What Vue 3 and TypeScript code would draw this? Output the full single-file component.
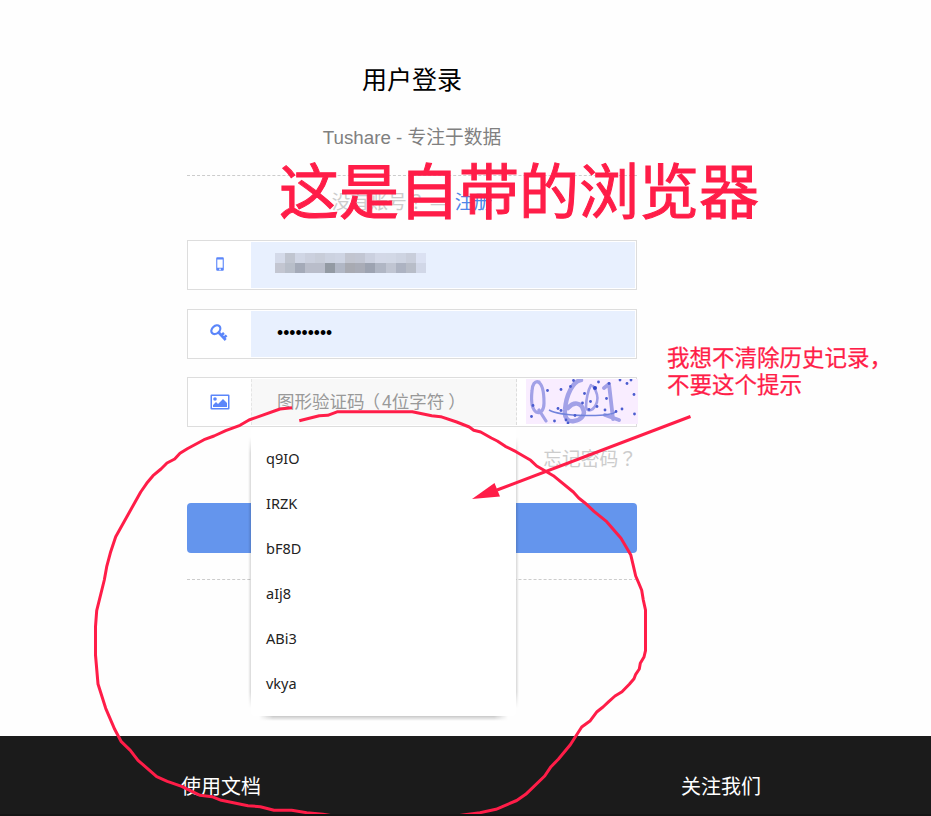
<script setup lang="ts">
const suggestions: string[] = ['q9IO', 'IRZK', 'bF8D', 'aIj8', 'ABi3', 'vkya']
const mosaic: string[] = [
  '#d4dae9', '#c0c5d0', '#d0d6e5', '#cbd0de', '#c8cdd9', '#ccd2e0', '#ced4e3', '#c2c5d0', '#c2c6d3', '#cbd0df', '#d3d8e7', '#d2d8e6', '#ced4e2', '#c9cedb', '#dbe1f2',
  '#c3c6d1', '#b8bec9', '#a4aab8', '#b9bdca', '#b9bdca', '#939aa3', '#b1b7c5', '#a8aab2', '#a9acb7', '#9da3b1', '#b0b6c4', '#c0c5d2', '#adb3c2', '#b8bdc8', '#d1d7e7',
]
const dots: number[][] = [
  [21.5, 11.5], [35, 10.5], [7, 26.5], [5.5, 37.5], [28.5, 42], [32, 29.5], [35, 31.5], [44.5, 7.5], [47.5, 1.5], [58.5, 14.5],
  [56.5, 24], [64.5, 22.5], [63, 30.5], [72.5, 3], [71, 27.5], [49, 36.5], [40, 41], [42, 44], [80.5, 19.5], [83, 4.5],
  [79, 31], [94, 1], [101, 4.5], [105, 1], [108, 15.5], [96, 30], [108.5, 35], [90, 32.5],
]
</script>

<template>
  <div class="page">
    <main class="login">
      <h1>用户登录</h1>
      <p class="subtitle">Tushare - 专注于数据</p>
      <div class="rule"></div>
      <p class="register">没有账号<span class="mark">？</span> — <a>注册</a></p>

      <div class="field">
        <span class="icon phone">
          <svg width="10" height="14" viewBox="0 0 10 14"><path fill-rule="evenodd" d="M2.2 .3h5.6q1 0 1 1v11.4q0 1-1 1H2.2q-1 0-1-1V1.3q0-1 1-1ZM2.3 2.5v8.3h5.4V2.5ZM5 11.5a.8.8 0 1 0 .01 0Z" /></svg>
        </span>
        <div class="input filled"><span class="mosaic"><i v-for="(c, n) in mosaic" :key="n" :style="{ backgroundColor: c }"></i></span></div>
      </div>
      <div class="field second">
        <span class="icon key">
          <svg width="18" height="18" viewBox="0 0 18 18"><g fill="none" stroke="#5b86fa"><ellipse cx="5.8" cy="5.7" rx="5" ry="3.700" transform="rotate(-42 5.8 5.7)" stroke-width="2.200" /><path d="M8.2 8l7.5 8M11.3 11.2l2.7-2.3M13.8 13.9l2.8-2.5" stroke-width="2.600" /></g></svg>
        </span>
        <div class="input filled password">•••••••••</div>
      </div>
      <div class="field third">
        <span class="icon">
          <svg width="20" height="16" viewBox="0 0 20 16"><path fill-rule="evenodd" d="M1.5.5h17q1 0 1 1v13q0 1-1 1h-17q-1 0-1-1v-13q0-1 1-1ZM2 2v12h16V2Z" /><circle cx="5" cy="5" r="1.8" /><path d="M3 13v-2l3-3 2 2 5-5 4 4v4Z" /></svg>
        </span>
        <div class="input captcha-input">图形验证码<span class="open">（</span>4位字符<span class="close">）</span></div>
        <svg class="captcha" width="112" height="45" viewBox="0 0 112 45">
          <rect width="112" height="45" fill="#f9edff" />
          <g class="scrawl" fill="none" stroke="#8588df" stroke-linecap="round" stroke-linejoin="round" opacity=".75">
            <path d="M13 3C9 1 6 6 6 12c-1 9 0 18 4 21 5 2 8-2 8-9C18 15 17 5 12 3M13 31l7 11" stroke-width="3.2" />
            <path d="M55 1c-8 1-15 15-16 30-1 8 3 12 9 11 7-1 12-6 9-12-2-6-9-8-15-1" stroke-width="4.5" />
            <path d="M65 6c-3 5-5 15-5 22 1 6 8 4 11-5 2-7-2-13-4-16" stroke-width="2.6" />
            <path d="M78 9l5-4 4 35M79 36l14 5" stroke-width="3.8" />
          </g>
          <path d="M23 31q9 5 36 5.500T90 32.500" fill="none" stroke="#7183dc" stroke-width="1.500" />
          <circle v-for="(d, n) in dots" :key="n" :cx="d[0]" :cy="d[1]" r="1.4" fill="#4a5ccf" />
          <circle cx="69" cy="9" r="2" fill="#2f43c3" />
        </svg>
        <ul class="suggestions">
          <li v-for="s in suggestions" :key="s">{{ s }}</li>
        </ul>
      </div>
      <p class="forgot">忘记密码<span class="mark">？</span></p>
      <div class="submit"></div>
      <div class="rule lower"></div>
    </main>
    <footer><h2>使用文档</h2><h2>关注我们</h2></footer>

    <div class="headline">这是自带的浏览器</div>
    <div class="note">我想不清除历史记录，<br />不要这个提示</div>
    <svg class="marks" width="931" height="814" viewBox="0 0 931 814">
      <g fill="none" stroke="#ff1d48" stroke-width="3" stroke-linejoin="round">
        <path d="M292 407.700L280 409 249 420 240 425.300 225.700 430.700 214 436 204 439.700 187.300 448.700 180 453.300 174.700 459 167 463 161 469 153 475.700 146.700 483.300 140.700 492 115.700 536.700 110.700 551.700 106.700 566.700 104.300 580 96.700 610.700 95.500 626.700 95.500 655 98 684 105.700 708.300 114.700 729.300 121.300 741.700 130.300 750.300 138 760.300 156.700 776.700 167.300 781.300 181.700 786.300 200 795.300 212 796.700 221.300 800.300 248 805.700 260.300 806.700 274 810.300 291.700 810.300 306.700 812.700 323 814.300 340 817H450L463 815 480 812.700 496 809.300 516.700 800.500 525.700 794.300 544.700 776 551 766.700 558.300 759.300 570.300 744.700 581.700 727 590.300 720.700 597 711.700 603 707 609 701.300 615 696 622 691.700 629.300 684.300 634 678.700 635.700 674.300 639.300 669 640.300 663.300 644 657 645.500 650.700V610L643.300 600 641.700 590.300 638.700 583 635.700 576 633 564.300 630.700 554.700 621 538.300 606.700 521.700 594 511.300 584.700 502.700 578.700 498 573.300 492 553.300 475.700 545.300 471 536.700 466 530.700 460.300 516 451.700 505.300 446.300 497.300 441 491.300 438 480.700 432 473.700 430.300 469.300 427 456.700 422 440.700 416.700 431.700 415.700 412.300 411.700H337.700L327.700 415.300 319.300 415.700 299.300 420.700" />
        <path d="M690.500 416.500L497 490" />
      </g>
      <path d="M472 499l22.500-16 5.500 13.500Z" fill="#ff1d48" />
    </svg>
  </div>
</template>

<style>
body { margin: 0; }
</style>

<style scoped>
* { box-sizing: border-box; }
.page { position: relative; width: 931px; height: 816px; overflow: hidden; background: #fefefe; font-family: "Liberation Sans", "Noto Sans CJK SC", sans-serif; display: flex; flex-direction: column; }
.login { width: 450px; height: 736px; margin-left: 187px; padding-top: 62px; flex: none; }
h1, h2, p, ul { margin: 0; padding: 0; font-weight: 400; }
h1 { height: 37px; line-height: 37px; font-size: 25px; color: #000; text-align: center; }
.subtitle { height: 28px; line-height: 28px; margin-top: 25px; font-size: 18.75px; color: #808080; text-align: center; }
.rule { border-top: 1px dashed #ccc; margin-top: 23px; }
.register { height: 28px; line-height: 28px; margin-top: 13px; font-size: 18.75px; color: #ccc; text-align: center; }
.register a { color: #4d86e8; }
.mark { font-family: "Noto Sans CJK TC", sans-serif; line-height: 1; }
.field { position: relative; display: flex; width: 450px; height: 50px; margin-top: 23px; border: 1px solid #ddd; padding: 1px; background: #fff; }
.second { margin-top: 19px; }
.third { margin-top: 18px; }
.icon { width: 62px; display: flex; justify-content: center; align-items: center; fill: #5b86fa; flex: none; }
.phone { padding: 0 1px 2px 0; }
.key { padding: 0 2px 2px 0; }
.input { flex: 1; display: flex; align-items: center; padding-left: 26px; }
.filled { background: #e8f0fe; }
.mosaic { display: grid; grid-template-columns: repeat(15, 10.060px); grid-auto-rows: 10px; margin: 0 0 4px -2px; }
.password { font-size: 17.500px; color: #000; padding-bottom: 1px; }
.captcha-input { flex: 0 0 266px; background: #f8f8f8; border-left: 1px dashed #e5e5e5; border-right: 1px dashed #ddd; padding: 0 0 3px 25px; font-size: 17.500px; color: #999; white-space: nowrap; }
.open { margin: 0 2px 0 -2px; }
.close { margin-left: 4px; }
.captcha { flex: none; margin-left: 9px; }
.scrawl { filter: blur(.4px); }
.suggestions { position: absolute; left: 63px; top: 49px; width: 265px; height: 289px; padding-top: 9px; list-style: none; background: #fff; border-radius: 4px; z-index: 1; }
.suggestions::before, .suggestions::after { content: ""; position: absolute; z-index: -1; pointer-events: none; }
.suggestions::before { left: -3px; right: -3px; top: 10px; bottom: 8px; background: linear-gradient(90deg, transparent, rgba(0, 0, 0, .15) 3px, transparent 3px, transparent calc(100% - 3px), rgba(0, 0, 0, .15) calc(100% - 3px), transparent); mask-image: linear-gradient(transparent, #000 16px, #000 calc(100% - 16px), transparent); }
.suggestions::after { left: 8px; right: 8px; bottom: -5px; height: 5px; background: linear-gradient(#c8c8c8, transparent); mask-image: linear-gradient(90deg, transparent, #000 14px, #000 calc(100% - 14px), transparent); }
.suggestions li { height: 45px; line-height: 45px; padding-left: 15px; font-family: "Noto Sans", sans-serif; font-size: 14.500px; color: #222; }
.forgot { height: 28px; line-height: 28px; margin-top: 19px; font-size: 18.750px; color: #ccc; text-align: right; }
.submit { height: 50px; margin-top: 29px; border-radius: 4px; background: #6495ed; }
.lower { margin-top: 26px; }
footer { height: 80px; flex: none; padding: 37px 0 0 181px; display: flex; gap: 420px; background: #1b1b1b; border-bottom: 2px solid #151515; }
h2 { width: 80px; height: 28px; line-height: 28px; font-size: 20px; color: #fff; }
.headline { position: absolute; left: 279px; top: 150px; line-height: 88px; font-size: 60px; color: #ff1d48; -webkit-text-stroke: 1px #ff1d48; white-space: nowrap; z-index: 2; }
.note { position: absolute; left: 667px; top: 345px; line-height: 27px; font-size: 22.500px; color: #ff1d48; -webkit-text-stroke: .25px #ff1d48; white-space: nowrap; z-index: 2; }
.marks { position: absolute; left: 0; top: 0; z-index: 3; }
</style>
